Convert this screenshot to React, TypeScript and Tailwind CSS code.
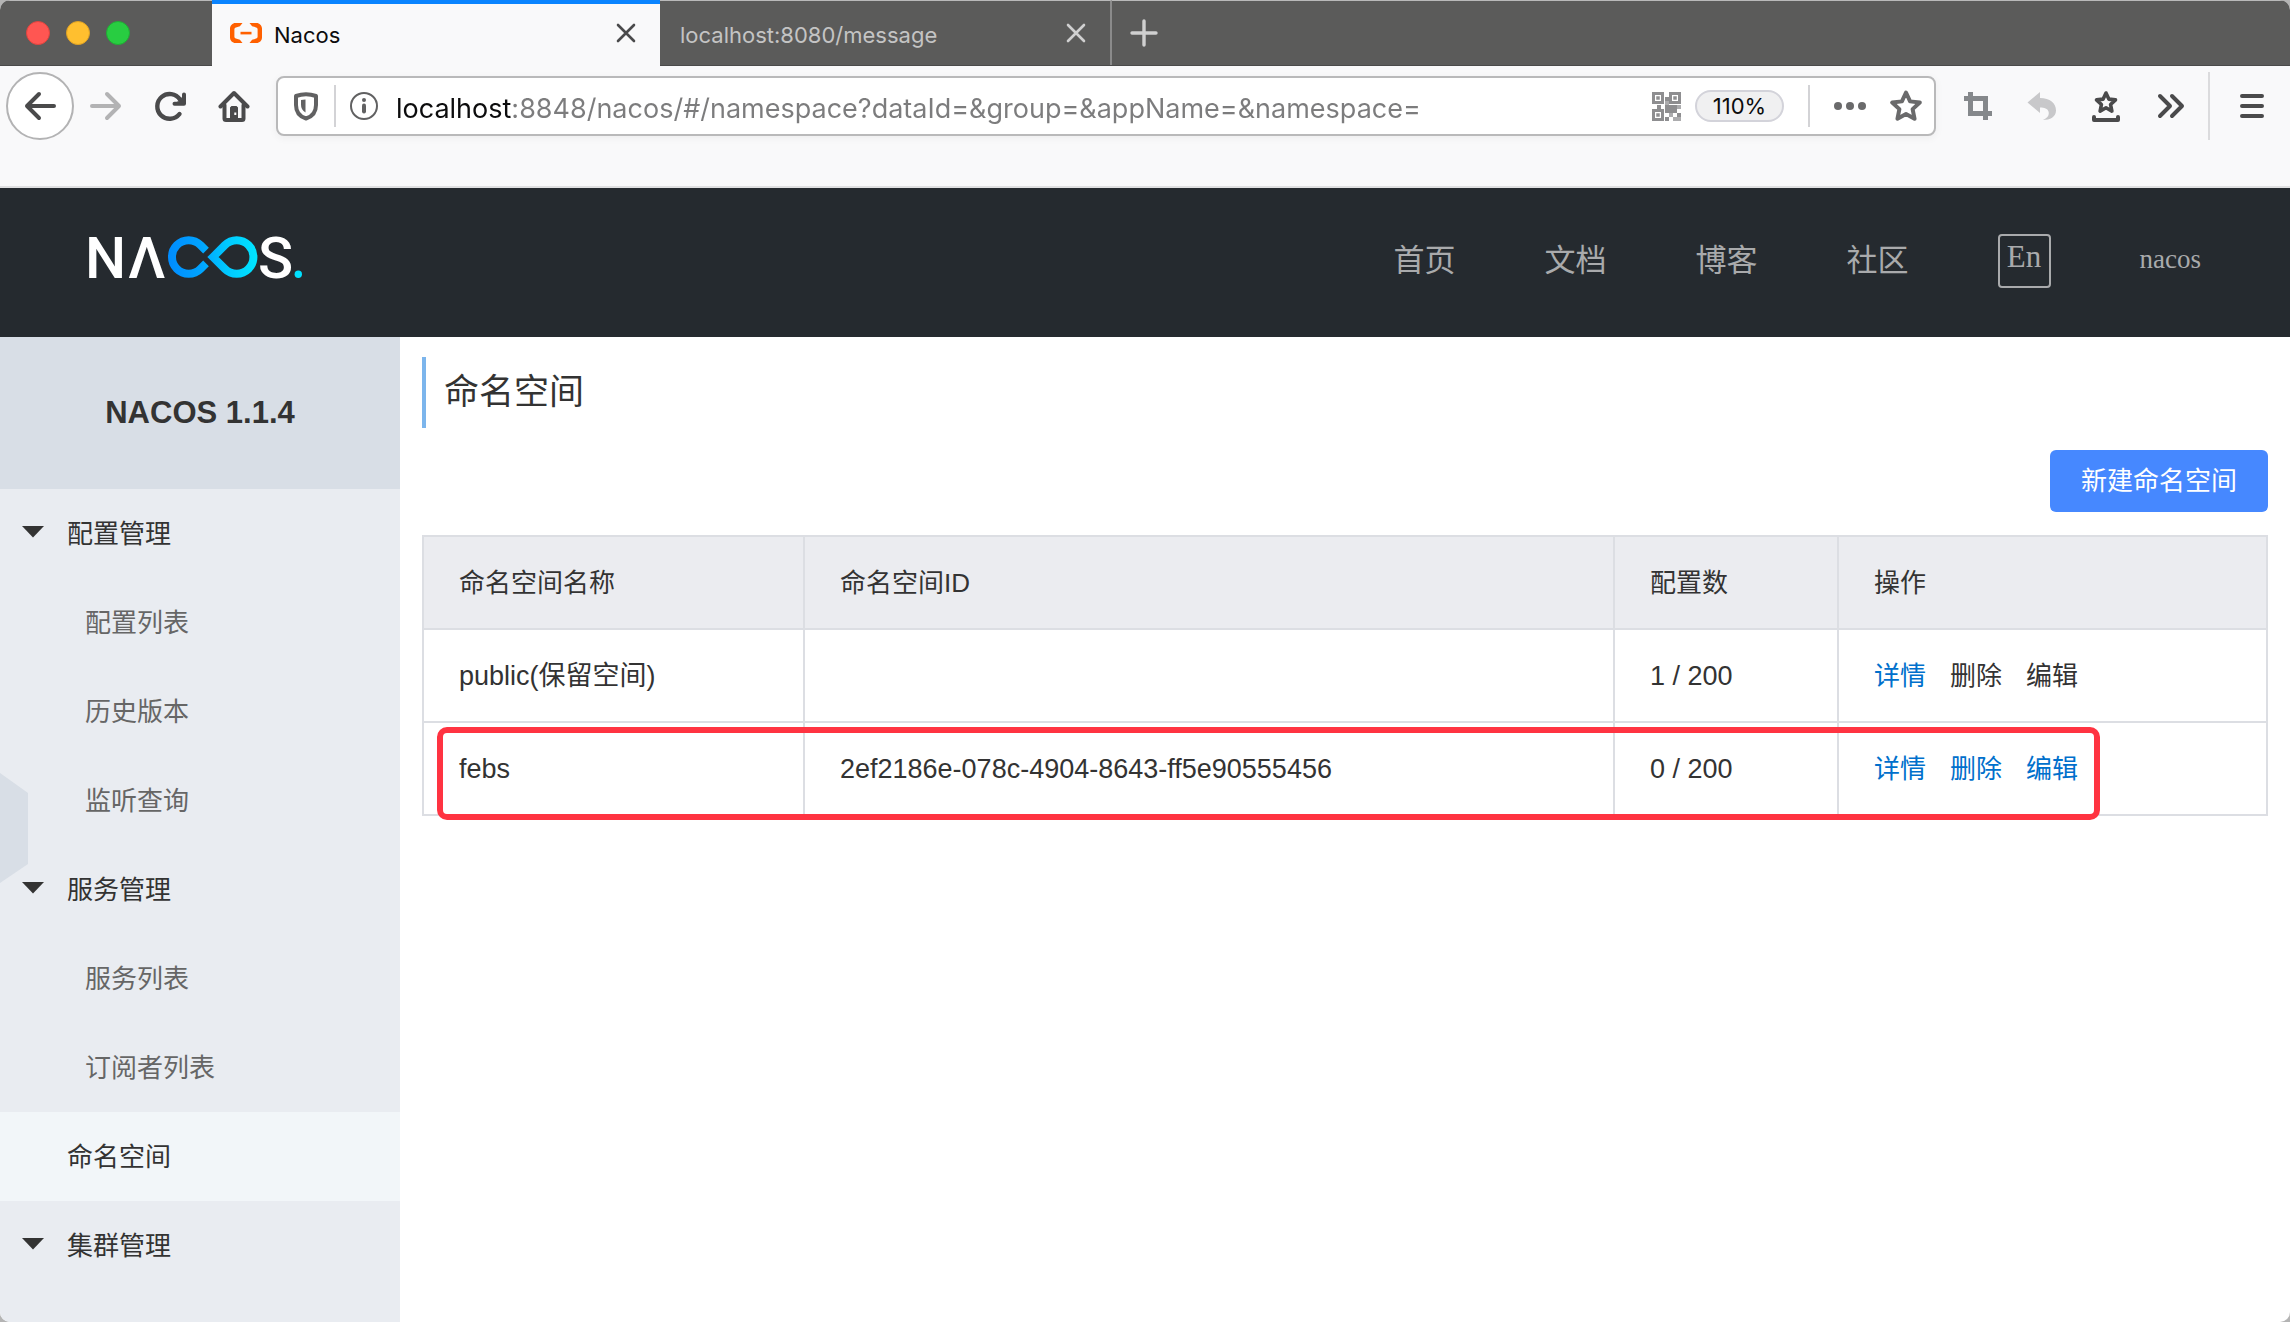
import React from "react";

function starPath(cx: number, cy: number, r: number) {
  const pts: string[] = [];
  for (let i = 0; i < 10; i++) {
    const rad = i % 2 === 0 ? r : r * 0.48;
    const a = -Math.PI / 2 + (i * Math.PI) / 5;
    pts.push(`${(cx + rad * Math.cos(a)).toFixed(2)} ${(cy + rad * Math.sin(a)).toFixed(2)}`);
  }
  return `M${pts.join("L")}Z`;
}

type IconProps = { children: React.ReactNode; className?: string };

function Icon({ children, className = "" }: IconProps) {
  return (
    <svg
      viewBox="0 0 32 32"
      className={`size-8 shrink-0 ${className}`}
      fill="none"
      stroke="currentColor"
      strokeWidth="4"
      strokeLinecap="round"
      strokeLinejoin="round"
      aria-hidden="true"
    >
      {children}
    </svg>
  );
}

function CloseIcon() {
  return (
    <svg viewBox="0 0 20 20" className="size-5" stroke="currentColor" strokeWidth="2.6" strokeLinecap="round" aria-hidden="true">
      <path d="M2 2l16 16M18 2L2 18" />
    </svg>
  );
}

function BracketIcon() {
  const half = "M12.5 0H5.5C2.5 0 0 2.5 0 5.5v9C0 17.5 2.5 20 5.5 20h7l-2.6-3.2-4-1.2A2 2 0 0 1 4.4 14V6a2 2 0 0 1 1.5-1.6l4-1.2z";
  return (
    <svg viewBox="0 0 32 20" className="h-5 w-8" fill="#ff6000" aria-hidden="true">
      <path d={half} />
      <path d={half} transform="translate(32 0) scale(-1 1)" />
      <rect x="10.5" y="8.8" width="11" height="2.6" />
    </svg>
  );
}

function QrIcon() {
  const finders = [[0, 0], [17, 0], [0, 17]];
  const dots = [
    [13, 5], [13, 9], [13, 13], [17, 13], [25, 13], [5, 13], [21, 17], [17, 21], [25, 21],
    [13, 17], [21, 25], [13, 25], [17, 17], [25, 25], [21, 13],
  ];
  return (
    <svg viewBox="0 0 29 29" className="h-[29px] w-[29px]" aria-hidden="true">
      {finders.map(([x, y]) => (
        <g key={`${x}-${y}`}>
          <rect x={x + 1.5} y={y + 1.5} width="9" height="9" fill="none" stroke="#8e8e90" strokeWidth="3" />
          <rect x={x + 4.25} y={y + 4.25} width="3.5" height="3.5" fill="#8e8e90" />
        </g>
      ))}
      {dots.map(([x, y], i) => (
        <rect key={i} x={x} y={y} width="4" height="4" fill={i % 3 === 1 ? "#acacae" : "#8e8e90"} />
      ))}
    </svg>
  );
}

function NacosLogo() {
  return (
    <svg viewBox="0 0 214 42" className="h-[42px] w-[214px] overflow-visible" role="img" aria-label="NACOS.">
      <defs>
        <linearGradient id="loop" gradientUnits="userSpaceOnUse" x1="79" y1="0" x2="169" y2="0">
          <stop offset="0" stopColor="#008cff" />
          <stop offset="0.35" stopColor="#00a2ff" />
          <stop offset="0.65" stopColor="#00c8ff" />
          <stop offset="1" stopColor="#00e6ff" />
        </linearGradient>
      </defs>
      <g fill="#fff" fontFamily="Roboto, sans-serif" fontWeight="500" fontSize="58">
        <text x="-4" y="41.5">N</text>
        <text x="39" y="41.5">Λ</text>
        <text x="169" y="41.5">S</text>
      </g>
      <g fill="none" stroke="url(#loop)" strokeWidth="8">
        <path d="M117 14.7L111.5 9.2A16.7 16.7 0 1 0 111.5 32.8L117 27.3" />
        <path d="M124 21L135.9 9.2A16.7 16.7 0 1 1 135.9 32.8Z" />
      </g>
      <circle cx="209.3" cy="38.3" r="3.7" fill="#00e0ff" />
    </svg>
  );
}

function TabBar() {
  return (
    <div className="flex h-[66px] items-stretch border-b border-[#4a4a4a] bg-[#5b5b5a]">
      <div className="flex w-[212px] items-center gap-4 border-t border-[#b9b9b9] pl-[26px]">
        <button aria-label="Close window" className="size-6 rounded-full border border-[#e0443e] bg-[#ff5652]" />
        <button aria-label="Minimize window" className="size-6 rounded-full border border-[#dea123] bg-[#ffbf2f]" />
        <button aria-label="Zoom window" className="size-6 rounded-full border border-[#1fae33] bg-[#28cd41]" />
      </div>
      <div className="-mb-px flex w-[448px] items-center gap-3 border-t-4 border-[#0a84ff] bg-[#f9f9fa] pr-6 pb-1 pl-[18px]">
        <BracketIcon />
        <span className="flex-1 pt-1 text-[22px] leading-7 text-[#0c0c0d]">Nacos</span>
        <button aria-label="Close tab" className="text-[#4a4a4b]">
          <CloseIcon />
        </button>
      </div>
      <div className="flex w-[452px] items-center border-t border-r-2 border-t-[#b9b9b9] border-r-[#8b8b8b] pr-6 pl-5">
        <span className="flex-1 pt-1 text-[22px] leading-7 text-[#c4c4c4]">localhost:8080/message</span>
        <button aria-label="Close tab" className="text-[#d0d0d0]">
          <CloseIcon />
        </button>
      </div>
      <div className="flex flex-1 items-center border-t border-[#b9b9b9] pl-4">
        <button aria-label="New tab" className="text-[#d0d0d0]">
          <Icon>
            <path d="M16 4v24M4 16h24" strokeWidth="3.4" />
          </Icon>
        </button>
      </div>
    </div>
  );
}

function Toolbar() {
  return (
    <div className="flex h-[122px] items-start border-b-2 border-[#e0e0e1] bg-[#f9f9fa] pt-1.5 pr-[22px] pl-1.5 text-[#4a4a4b]">
      <div className="flex flex-1 items-center">
        <button aria-label="Back" className="flex size-[68px] items-center justify-center rounded-full border-2 border-[#b3b3b4] bg-white">
          <Icon>
            <path d="M30 16H3M15 4L3 16l12 12" />
          </Icon>
        </button>
        <div className="ml-4 flex items-center gap-8">
          <button aria-label="Forward" className="text-[#b3b3b4]">
            <Icon>
              <path d="M2 16h27M17 4l12 12-12 12" />
            </Icon>
          </button>
          <button aria-label="Reload">
            <Icon>
              <path d="M25.5 24A12.4 12.4 0 1 1 26 9.5" strokeWidth="4.4" />
              <path d="M30 4.5V13.7H20.5" />
              <path d="M30 6v8h-8z" strokeWidth="1" fill="currentColor" />
            </Icon>
          </button>
          <button aria-label="Home">
            <Icon>
              <path d="M2.5 16.5L16 3l13.5 13.5" />
              <path d="M6.5 15v13.5q0 1.500 1.500 1.500h16q1.500 0 1.500-1.500V15" />
              <path d="M12.5 30V18q0-1.500 1.500-1.500h4q1.500 0 1.500 1.500v12z" fill="currentColor" strokeWidth="1" />
              <rect x="16.300" y="22.500" width="2" height="2.500" fill="#fff" stroke="none" />
            </Icon>
          </button>
        </div>
        <form
          onSubmit={(e) => e.preventDefault()}
          className="ml-[26px] flex h-[60px] flex-1 items-center rounded-lg border-2 border-[#b9b9ba] bg-white px-3 shadow-[0_2px_8px_rgba(0,0,0,0.05)]"
        >
          <button type="button" aria-label="Tracking protection" className="text-[#616162]">
            <Icon>
              <path d="M6 6Q16 2.600 26 6v9c0 8-5 12-10 13.500C11 27 6 23 6 15z" />
              <path d="M15.500 9.500v13c-3-1.800-4.500-4-4.500-8v-4.500z" fill="currentColor" stroke="none" />
            </Icon>
          </button>
          <span className="ml-3 h-[42px] w-0.5 bg-[#d3d3d6]" />
          <button type="button" aria-label="Site information" className="ml-3 text-[#616162]">
            <Icon>
              <circle cx="16" cy="16" r="13" strokeWidth="2" />
              <circle cx="16" cy="10" r="2" fill="currentColor" stroke="none" />
              <path d="M16 15.500v6" />
            </Icon>
          </button>
          <input
            aria-label="Address"
            defaultValue="localhost:8848/nacos/#/namespace?dataId=&group=&appName=&namespace="
            className="ml-4 h-11 min-w-0 flex-1 bg-[linear-gradient(to_right,#0c0c0d_116px,#7c7c7d_116px)] bg-clip-text pt-1 text-[27px] text-transparent caret-black outline-none"
          />
          <button type="button" aria-label="QR code">
            <QrIcon />
          </button>
          <button type="button" className="ml-3.5 h-8 w-[89px] rounded-full border-2 border-[#d3d3da] bg-[#f0f0f1] text-[22px] leading-7 text-[#0c0c0d]">
            110%
          </button>
          <span className="ml-6 h-[42px] w-0.5 bg-[#d3d3d6]" />
          <button type="button" aria-label="Page actions" className="ml-6 text-[#6a6a6b]">
            <Icon>
              <g fill="currentColor" stroke="none">
                <circle cx="4" cy="16" r="4" />
                <circle cx="16" cy="16" r="4" />
                <circle cx="28" cy="16" r="4" />
              </g>
            </Icon>
          </button>
          <button type="button" aria-label="Bookmark this page" className="ml-6 text-[#6a6a6b]">
            <Icon>
              <path d={starPath(16, 17, 14.5)} />
            </Icon>
          </button>
        </form>
        <div className="ml-[26px] flex items-center gap-8">
          <button aria-label="Screenshot" className="text-[#85888b]">
            <Icon>
              <g strokeLinecap="butt" strokeLinejoin="miter" strokeWidth="5">
                <path d="M8.500 2v21.500H30" />
                <path d="M2 8.500h21.500V30" />
              </g>
            </Icon>
          </button>
          <button aria-label="Undo" className="text-[#c8c8ca]">
            <Icon>
              <path
                d="M1.500 12.500L14 2v6c10 0 16 5 16 12.500C30 27 24 30 17 30c5-2 6.500-5.500 5.500-8.500-1-3-4-4-8.500-4V23z"
                fill="currentColor"
                stroke="none"
              />
            </Icon>
          </button>
          <button aria-label="Bookmarks menu">
            <Icon>
              <path d={starPath(16, 13, 10)} strokeWidth="3.600" />
              <path d="M4 27v3h24v-3" />
            </Icon>
          </button>
          <button aria-label="More tools">
            <Icon>
              <path d="M6 6l10 10L6 26M18 6l10 10-10 10" />
            </Icon>
          </button>
        </div>
        <span className="ml-[22px] h-[68px] w-0.5 bg-[#dbdbdd]" />
        <button aria-label="Open menu" className="ml-[26px]">
          <Icon>
            <path d="M6 6h20M6 16h20M6 26h20" />
          </Icon>
        </button>
      </div>
    </div>
  );
}

function SiteHeader() {
  return (
    <header className="flex h-[149px] items-center justify-between bg-[#252a2f] px-[89px] pb-1 text-[#a9aaac]">
      <a href="#home" className="pb-2">
        <NacosLogo />
      </a>
      <nav className="flex items-center gap-[89px] font-['Liberation_Serif','Noto_Sans_CJK_SC',serif] text-[31px] leading-9">
        <a href="#index">首页</a>
        <a href="#docs">文档</a>
        <a href="#blog">博客</a>
        <a href="#community">社区</a>
        <button className="h-[54px] w-[53px] rounded border-2 border-[#a9aaac] pb-2">En</button>
        <a href="#user" className="pb-1 text-[27px]">nacos</a>
      </nav>
    </header>
  );
}

const menu = [
  { label: "配置管理", kind: "group" },
  { label: "配置列表", kind: "child" },
  { label: "历史版本", kind: "child" },
  { label: "监听查询", kind: "child" },
  { label: "服务管理", kind: "group" },
  { label: "服务列表", kind: "child" },
  { label: "订阅者列表", kind: "child" },
  { label: "命名空间", kind: "current" },
  { label: "集群管理", kind: "group" },
];

function Sidebar() {
  return (
    <aside className="relative w-[400px] shrink-0 bg-[#e9ecf1] text-[26px] leading-10">
      <h2 className="flex h-[152px] items-center justify-center bg-[#d8dee6] text-[31px] font-bold text-[#333]">NACOS 1.1.4</h2>
      <ul>
        {menu.map(({ label, kind }) => (
          <li key={label}>
            {kind === "group" && (
              <button className="flex h-[89px] w-full items-center text-[#333]">
                <svg viewBox="0 0 22 12" className="mr-[23px] mb-1 ml-[22px] h-3 w-[22px]" fill="#333" aria-hidden="true">
                  <path d="M0 0h22L11 11.500z" />
                </svg>
                {label}
              </button>
            )}
            {kind === "child" && (
              <a href={`#${label}`} className="flex h-[89px] items-center pl-[85px] text-[#666]">
                {label}
              </a>
            )}
            {kind === "current" && (
              <a href={`#${label}`} aria-current="page" className="flex h-[89px] items-center bg-[#f2f6f9] pl-[67px] text-[#333]">
                {label}
              </a>
            )}
          </li>
        ))}
      </ul>
      <button aria-label="Collapse sidebar" className="absolute top-[436px] left-0 h-[110px] w-7">
        <svg viewBox="0 0 28 110" className="h-[110px] w-7" fill="#d8dee6" aria-hidden="true">
          <path d="M0 0L28 20V91L0 110z" />
        </svg>
      </button>
    </aside>
  );
}

const rows = [
  { name: "public(保留空间)", id: "", count: "1 / 200", reserved: true },
  { name: "febs", id: "2ef2186e-078c-4904-8643-ff5e90555456", count: "0 / 200", reserved: false },
];

function NamespaceTable() {
  const cell = "h-[93px] border-2 border-[#dcdee3] px-[35px] text-left align-middle font-normal";
  return (
    <div className="relative mt-[23px]">
      <table className="w-full table-fixed border-collapse text-[27px] leading-10">
        <colgroup>
          <col className="w-[381px]" />
          <col />
          <col className="w-[224px]" />
          <col className="w-[429px]" />
        </colgroup>
        <thead className="bg-[#ebecf0] text-[26px]">
          <tr>
            <th scope="col" className={cell}>命名空间名称</th>
            <th scope="col" className={cell}>命名空间ID</th>
            <th scope="col" className={cell}>配置数</th>
            <th scope="col" className={cell}>操作</th>
          </tr>
        </thead>
        <tbody>
          {rows.map((r) => (
            <tr key={r.name}>
              <td className={cell}>{r.name}</td>
              <td className={cell}>{r.id}</td>
              <td className={cell}>{r.count}</td>
              <td className={cell}>
                <div className="flex gap-6 text-[26px] text-[#0070cc]">
                  <button>详情</button>
                  <button disabled={r.reserved} className="disabled:text-[#333]">删除</button>
                  <button disabled={r.reserved} className="disabled:text-[#333]">编辑</button>
                </div>
              </td>
            </tr>
          ))}
        </tbody>
      </table>
      <div className="pointer-events-none absolute right-[168px] -bottom-1 left-[15px] h-[93px] rounded-[10px] border-6 border-[#ff3341]" />
    </div>
  );
}

export default function App() {
  return (
    <div className="min-h-screen bg-[#b4b4b4]">
      <div className="flex min-h-screen flex-col overflow-hidden rounded-[10px] bg-white font-['Inter','Noto_Sans_CJK_SC',sans-serif]">
        <TabBar />
        <Toolbar />
        <SiteHeader />
        <div className="flex flex-1 items-stretch font-['Liberation_Sans','Noto_Sans_CJK_SC',sans-serif]">
          <Sidebar />
          <main className="min-w-0 flex-1 px-[22px] pt-5 text-[#333]">
            <h1 className="flex h-[71px] items-center border-l-4 border-[#7cb5ec] pb-0.5 pl-[18px] text-[35px] leading-[52px]">命名空间</h1>
            <div className="mt-[22px] flex justify-end">
              <button className="h-[62px] rounded-md bg-[#4688ff] px-[31px] text-[26px] leading-10 text-white">新建命名空间</button>
            </div>
            <NamespaceTable />
          </main>
        </div>
      </div>
    </div>
  );
}
